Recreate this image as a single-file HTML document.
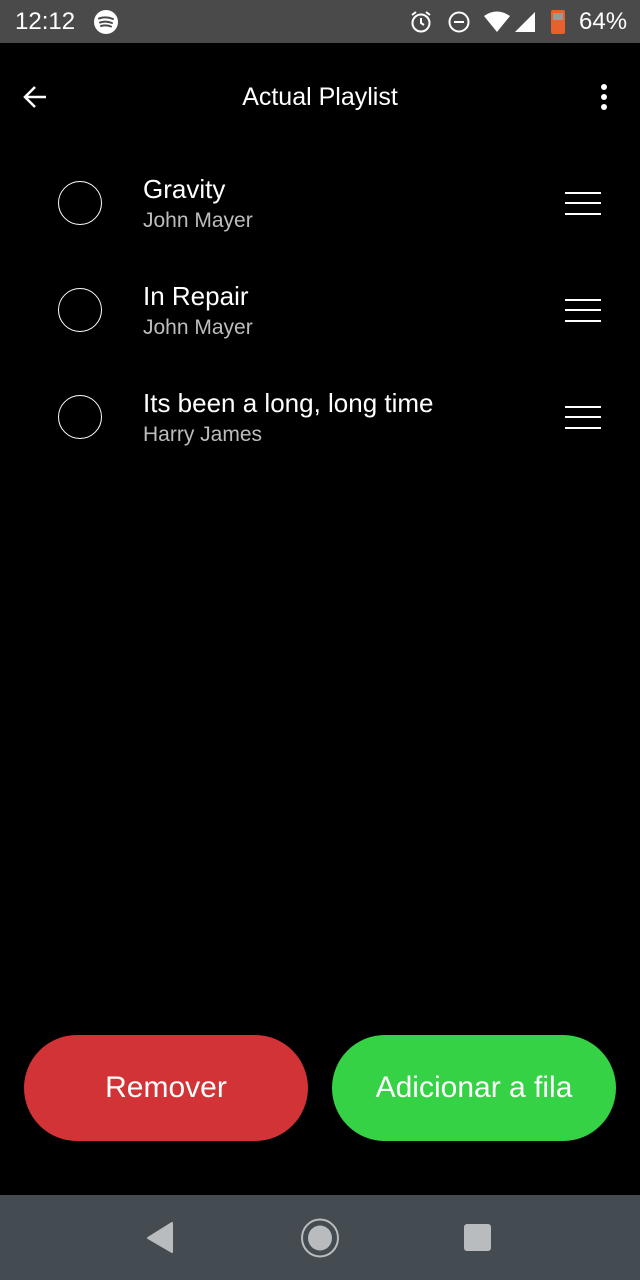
<!DOCTYPE html>
<html><head><meta charset="utf-8"><style>
*{margin:0;padding:0;box-sizing:border-box}
body{width:640px;height:1280px;background:#000;font-family:"Liberation Sans",sans-serif;color:#fff;position:relative;overflow:hidden}
.abs{position:absolute}
.sb{top:0;left:0;width:640px;height:43px;background:#4a4a4a}
.nav{top:1195px;left:0;width:640px;height:85px;background:#444b51}
.row .c{position:absolute;left:58px;width:44px;height:44px;border:1.5px solid #fff;border-radius:50%}
.t{position:absolute;left:143px;font-size:26px}
.a{position:absolute;left:143px;font-size:21px;color:#bdbdbd}
.h{position:absolute;left:565px;width:36px;height:2px;background:#fff}
.btn{position:absolute;top:1035px;height:106px;border-radius:53px;font-size:30px;display:flex;align-items:center;justify-content:center;color:#fff}
</style></head><body>
<div class="abs sb"></div>
<div class="abs" style="left:15px;top:8px;font-size:24px;color:#fff;font-weight:500">12:12</div>
<svg class="abs" style="left:93px;top:9px" width="26" height="26" viewBox="0 0 26 26"><circle cx="13" cy="13" r="12" fill="#fff"/><path d="M6 9.5Q13 7 20 10M7 13.5Q13 11.5 19 14M8 17Q13 15.5 18 17.5" stroke="#4a4a4a" stroke-width="2" fill="none" stroke-linecap="round"/></svg>
<svg class="abs" style="left:408px;top:9px" width="26" height="26" viewBox="0 0 26 26"><circle cx="13" cy="14" r="8.5" stroke="#fff" stroke-width="2" fill="none"/><path d="M13 9v5l3 2M4 6l4-3M22 6l-4-3" stroke="#fff" stroke-width="2" fill="none"/></svg>
<svg class="abs" style="left:447px;top:10px" width="24" height="24" viewBox="0 0 24 24"><circle cx="12" cy="12" r="9.5" stroke="#fff" stroke-width="2" fill="none"/><path d="M7 12h10" stroke="#fff" stroke-width="2"/></svg>
<svg class="abs" style="left:483px;top:11px" width="54" height="22" viewBox="0 0 54 22"><path d="M1 5Q14 -4 27 5L14 21Z" fill="#fff"/><path d="M52 1V21H32Z" fill="#fff"/></svg>
<div class="abs" style="left:551px;top:10px;width:14px;height:24px;background:#e8612c;border-radius:2px"></div>
<div class="abs" style="left:553px;top:13px;width:10px;height:7px;background:#999"></div>
<div class="abs" style="left:579px;top:8px;font-size:24px;font-weight:500">64%</div>

<svg class="abs" style="left:22px;top:84px" width="26" height="26" viewBox="0 0 26 26"><path d="M24 13H3M13 3L3 13l10 10" stroke="#fff" stroke-width="2.5" fill="none"/></svg>
<div class="abs" style="left:0;width:640px;top:83px;text-align:center;font-size:25px">Actual Playlist</div>
<div class="abs" style="left:601px;top:84px;width:6px;height:6px;border-radius:50%;background:#fff"></div>
<div class="abs" style="left:601px;top:94px;width:6px;height:6px;border-radius:50%;background:#fff"></div>
<div class="abs" style="left:601px;top:104px;width:6px;height:6px;border-radius:50%;background:#fff"></div>

<div class="row"><div class="c" style="top:181px"></div><div class="t" style="top:174px">Gravity</div><div class="a" style="top:209px">John Mayer</div>
<div class="h" style="top:192px"></div><div class="h" style="top:202px"></div><div class="h" style="top:213px"></div></div>
<div class="row"><div class="c" style="top:288px"></div><div class="t" style="top:281px">In Repair</div><div class="a" style="top:316px">John Mayer</div>
<div class="h" style="top:299px"></div><div class="h" style="top:309px"></div><div class="h" style="top:320px"></div></div>
<div class="row"><div class="c" style="top:395px"></div><div class="t" style="top:388px">Its been a long, long time</div><div class="a" style="top:423px">Harry James</div>
<div class="h" style="top:406px"></div><div class="h" style="top:416px"></div><div class="h" style="top:427px"></div></div>

<div class="btn" style="left:24px;width:284px;background:#d13336">Remover</div>
<div class="btn" style="left:332px;width:284px;background:#34d244">Adicionar a fila</div>

<div class="abs nav"></div>
<svg class="abs" style="left:145px;top:1220px" width="30" height="36" viewBox="0 0 30 36"><path d="M27 3V32L3 18Z" fill="#b8bcbe" stroke="#b8bcbe" stroke-width="2" stroke-linejoin="round"/></svg>
<svg class="abs" style="left:299px;top:1217px" width="42" height="42" viewBox="0 0 42 42"><ellipse cx="21" cy="21" rx="18" ry="18.5" stroke="#b8bcbe" stroke-width="2" fill="none"/><ellipse cx="21" cy="21" rx="12" ry="12.5" fill="#b8bcbe"/></svg>
<div class="abs" style="left:464px;top:1224px;width:27px;height:27px;border-radius:3px;background:#b8bcbe"></div>
</body></html>
